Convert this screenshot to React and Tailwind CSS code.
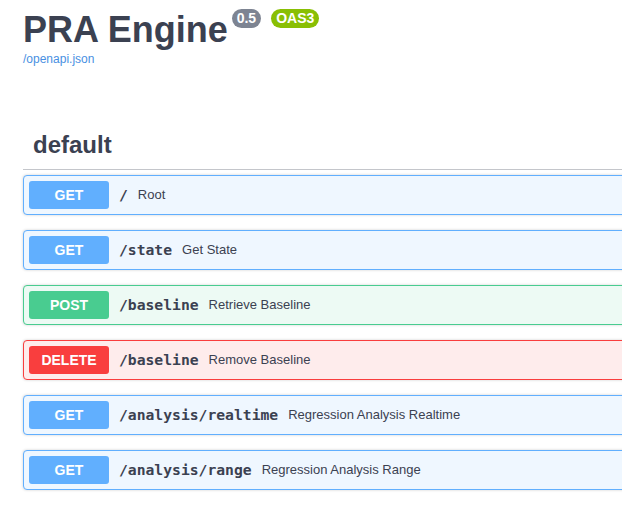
import React from "react";

const ops = [
  { m: "GET", path: "/", sum: "Root", bg: "bg-[#eff7ff]", border: "border-[#61affe]", btn: "bg-[#61affe]" },
  { m: "GET", path: "/state", sum: "Get State", bg: "bg-[#eff7ff]", border: "border-[#61affe]", btn: "bg-[#61affe]" },
  { m: "POST", path: "/baseline", sum: "Retrieve Baseline", bg: "bg-[#edfaf4]", border: "border-[#49cc90]", btn: "bg-[#49cc90]" },
  { m: "DELETE", path: "/baseline", sum: "Remove Baseline", bg: "bg-[#feecec]", border: "border-[#f93e3e]", btn: "bg-[#f93e3e]" },
  { m: "GET", path: "/analysis/realtime", sum: "Regression Analysis Realtime", bg: "bg-[#eff7ff]", border: "border-[#61affe]", btn: "bg-[#61affe]" },
  { m: "GET", path: "/analysis/range", sum: "Regression Analysis Range", bg: "bg-[#eff7ff]", border: "border-[#61affe]", btn: "bg-[#61affe]" },
];

export default function App() {
  return (
    <div className="w-[622px] h-[512px] overflow-hidden bg-white text-[#3b4151] font-['Liberation_Sans',Arial,sans-serif]">
      <div className="w-[1000px] pl-[23px]">
        <div className="flex items-start pt-[10px]">
          <h1 className="text-[36px] font-bold leading-[40px] m-0">PRA Engine</h1>
          <div className="flex gap-[10px] ml-[4px] -mt-[1px]">
            <span className="h-[19px] px-[5px] rounded-full bg-[#7d8492] text-white text-[14px] font-bold leading-[19px]">0.5</span>
            <span className="h-[19px] px-[5px] rounded-full bg-[#89bf04] text-white text-[14px] font-bold leading-[19px]">OAS3</span>
          </div>
        </div>
        <div className="mt-[2px] text-[12px] leading-[14px] text-[#4990e2]">/openapi.json</div>

        <div className="mt-[55px]">
          <h3 className="pt-[10px] pb-[10px] pl-[10px] text-[24px] font-bold leading-[28px] border-b border-[#c4c6cb]">default</h3>
          <div className="mt-[5px] flex flex-col gap-[15px]">
            {ops.map((o, i) => (
              <div key={i} className={`flex items-center p-[5px] border rounded-[4px] shadow-[0_0_3px_rgba(0,0,0,0.19)] ${o.bg} ${o.border}`}>
                <div className={`w-[80px] h-[28px] flex items-center justify-center rounded-[3px] text-white text-[14px] font-bold ${o.btn}`}>{o.m}</div>
                <span className="px-[10px] font-['DejaVu_Sans_Mono',monospace] font-bold text-[14.7px] leading-[20px]">{o.path}</span>
                <span className="text-[13px] leading-[16px]">{o.sum}</span>
              </div>
            ))}
          </div>
        </div>
      </div>
    </div>
  );
}
